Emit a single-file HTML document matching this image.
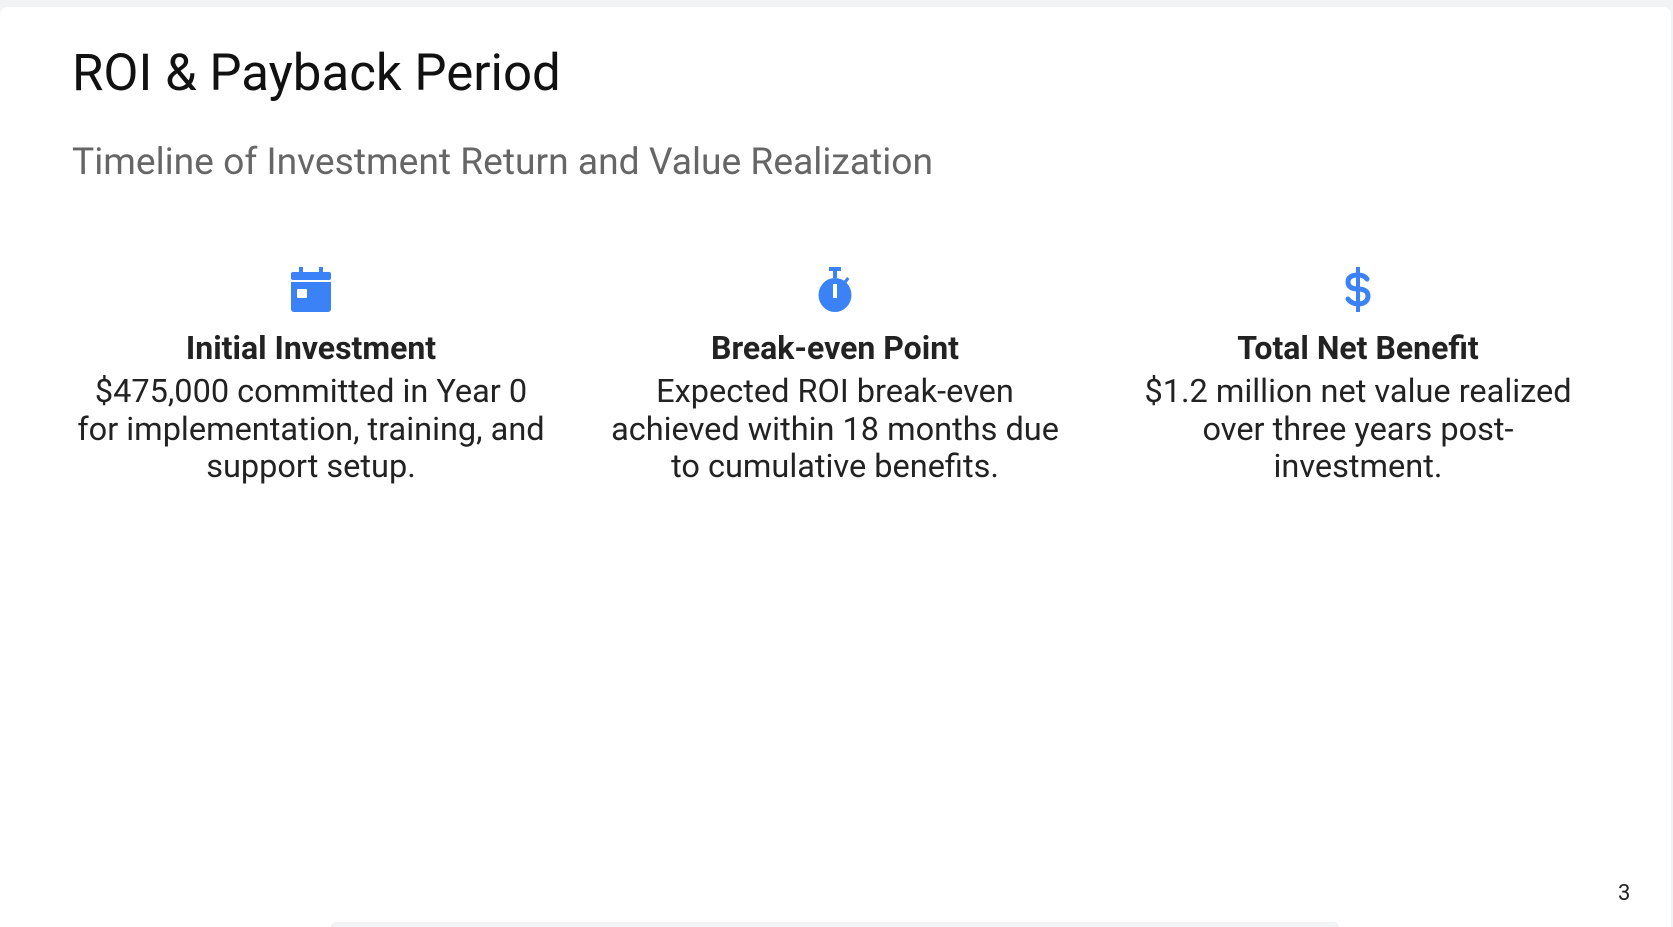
<!DOCTYPE html>
<html><head><meta charset="utf-8"><style>
html,body{margin:0;padding:0;width:1673px;height:927px;overflow:hidden;}
body{background:#f1f3f4;position:relative;font-family:"Roboto","Liberation Sans",sans-serif;}
.card{position:absolute;left:0;top:7px;width:1671px;height:920px;background:#fff;border-radius:8px 8px 0 0;}
.t{position:absolute;left:72px;top:44px;font-size:51px;color:#111;white-space:nowrap;}
.s{position:absolute;left:72px;top:140px;font-size:37.2px;color:#666;white-space:nowrap;}
.col{position:absolute;top:267px;width:560px;text-align:center;}
.col svg{display:block;margin:0 auto;height:45px;}
.h{font-size:32px;font-weight:bold;color:#222;margin-top:16px;line-height:40px;}
.b{font-size:32.5px;color:#222;line-height:37.5px;margin-top:5px;}
.pn{position:absolute;left:1618px;top:881px;font-size:22px;color:#222;}
.bot{position:absolute;left:331px;top:922px;width:1008px;height:5px;background:#f1f3f4;border-radius:10px 10px 0 0;}
</style></head><body>
<div class="card"></div>
<div class="t">ROI &amp; Payback Period</div>
<div class="s">Timeline of Investment Return and Value Realization</div>
<div class="col" style="left:31px">
<svg viewBox="0 0 40 45" width="40"><rect x="8" y="0" width="4" height="8" fill="#3b82f6"/><rect x="28" y="0" width="4" height="8" fill="#3b82f6"/><rect x="0" y="5" width="40" height="8" rx="2" fill="#3b82f6"/><path d="M0 15h40v27a3 3 0 0 1-3 3H3a3 3 0 0 1-3-3z" fill="#3b82f6"/><rect x="6" y="22" width="10" height="9" rx="1" fill="#fff"/></svg>
<div class="h">Initial Investment</div>
<div class="b">$475,000 committed in Year 0<br>for implementation, training, and<br>support setup.</div></div>
<div class="col" style="left:555px">
<svg viewBox="0 0 34 45" width="34"><rect x="11" y="0" width="12" height="4" fill="#3b82f6"/><rect x="15" y="3" width="4" height="8" fill="#3b82f6"/><rect x="27" y="10" width="3" height="6" transform="rotate(40 28 13)" fill="#3b82f6"/><ellipse cx="17" cy="28" rx="16.5" ry="17" fill="#3b82f6"/><rect x="15" y="17" width="4" height="14" fill="#fff"/></svg>
<div class="h">Break-even Point</div>
<div class="b">Expected ROI break-even<br>achieved within 18 months due<br>to cumulative benefits.</div></div>
<div class="col" style="left:1078px">
<svg viewBox="0 0 26 45" width="26"><rect x="11" y="0" width="4" height="45" fill="#3b82f6"/><path d="M22 12c-2-3-6-4-9-4C7 8 3 10 3 15s4 7 10 7 10 2 10 7-4 8-10 8c-4 0-8-2-10-5" fill="none" stroke="#3b82f6" stroke-width="5" stroke-linecap="round"/></svg>
<div class="h">Total Net Benefit</div>
<div class="b">$1.2 million net value realized<br>over three years post-<br>investment.</div></div>
<div class="pn">3</div>
<div class="bot"></div>
</body></html>
